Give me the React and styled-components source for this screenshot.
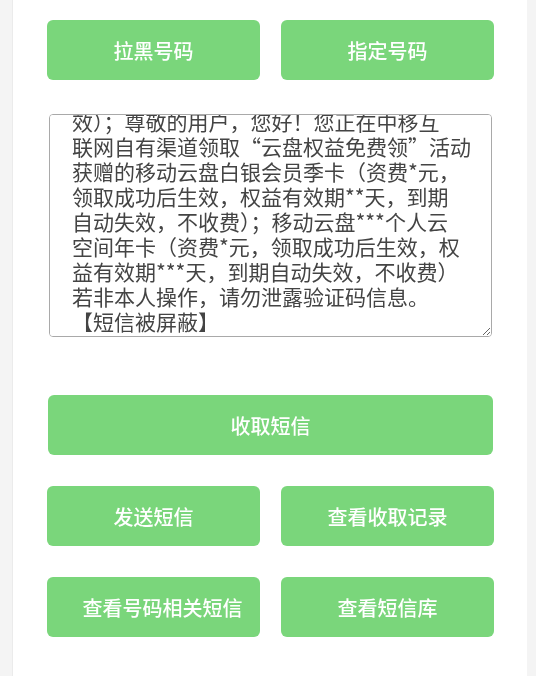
import React, { useLayoutEffect, useRef } from "react";
import styled, { createGlobalStyle } from "styled-components";

const GlobalStyle = createGlobalStyle`
  html, body {
    margin: 0;
    padding: 0;
    background: #f4f4f4;
  }
  * { box-sizing: border-box; }
`;

const Page = styled.div`
  min-height: 100vh;
  margin: 0 9px 0 12px;
  background: #ffffff;
  border-left: 1px solid #ebebeb;
  padding: 20px 33px 40px 34px;
  font-family: "Noto Sans CJK SC", "Noto Sans", sans-serif;
`;

const ButtonRow = styled.div`
  display: grid;
  grid-template-columns: 1fr 1fr;
  column-gap: 21px;
  margin-top: ${(p) => p.$top || 0}px;
`;

const ActionButton = styled.button`
  height: 60px;
  border: none;
  border-radius: 6px;
  background: #7ad67b;
  color: #ffffff;
  font-family: "Noto Sans CJK SC", "Noto Sans", sans-serif;
  font-size: 20px;
  font-weight: 500;
  padding: 0 0 0 ${(p) => p.$indent || 0}px;
  display: flex;
  align-items: center;
  justify-content: center;
  cursor: pointer;
`;

const WideButton = styled(ActionButton)`
  width: calc(100% - 2px);
  margin: 58px 1px 0 1px;
`;

const MessageBox = styled.textarea`
  display: block;
  width: 443px;
  height: 223px;
  margin: 34px 0 0 2px;
  padding: 2px 20px 2px 22px;
  border: 1px solid #a9a9a9;
  border-radius: 4px;
  background: #ffffff;
  color: #444444;
  font-family: "Noto Sans CJK SC", "Noto Sans", sans-serif;
  font-size: 21px;
  line-height: 25px;
  scrollbar-width: none;
  outline: none;
  &::-webkit-scrollbar { display: none; }
`;

const message = [
  "【中国移动】尊敬的用户，您好！您正在中",
  "移互联网自有渠道领取“云盘权益免费领”活",
  "动获赠的移动云盘白银会员月卡（资费*元，",
  "领取成功后生效，权益有效期**天，到期自动失",
  "效）；尊敬的用户，您好！您正在中移互",
  "联网自有渠道领取“云盘权益免费领”活动",
  "获赠的移动云盘白银会员季卡（资费*元，",
  "领取成功后生效，权益有效期**天，到期",
  "自动失效，不收费）；移动云盘***个人云",
  "空间年卡（资费*元，领取成功后生效，权",
  "益有效期***天，到期自动失效，不收费）",
  "若非本人操作，请勿泄露验证码信息。",
  "【短信被屏蔽】",
].join("\n");

export default function App() {
  const boxRef = useRef(null);

  useLayoutEffect(() => {
    const el = boxRef.current;
    if (el) el.scrollTop = el.scrollHeight;
  }, []);

  return (
    <>
      <GlobalStyle />
      <Page>
        <ButtonRow>
          <ActionButton>拉黑号码</ActionButton>
          <ActionButton>指定号码</ActionButton>
        </ButtonRow>

        <MessageBox ref={boxRef} defaultValue={message} />

        <WideButton>收取短信</WideButton>

        <ButtonRow $top={31}>
          <ActionButton>发送短信</ActionButton>
          <ActionButton>查看收取记录</ActionButton>
        </ButtonRow>

        <ButtonRow $top={31}>
          <ActionButton $indent={18}>查看号码相关短信</ActionButton>
          <ActionButton>查看短信库</ActionButton>
        </ButtonRow>
      </Page>
    </>
  );
}
